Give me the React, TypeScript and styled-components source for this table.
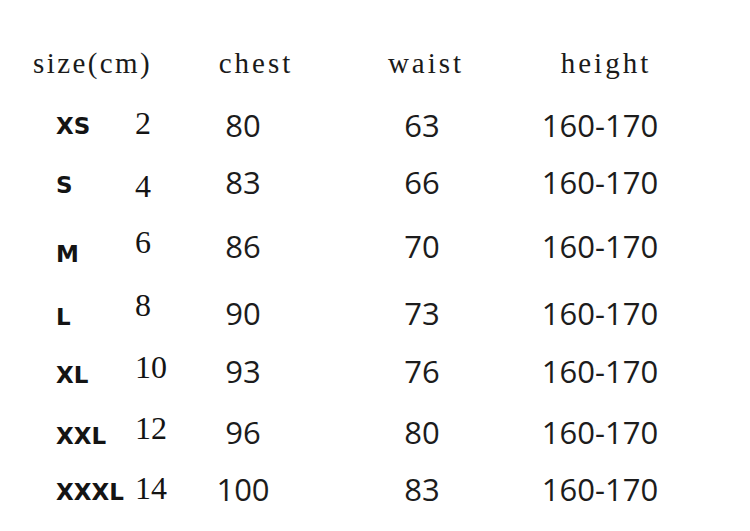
import React from "react";
import styled, { createGlobalStyle } from "styled-components";

const GlobalStyle = createGlobalStyle`
    html, body {
        margin: 0;
        padding: 0;
        background: #ffffff;
    }
`;

const Chart = styled.div`
    width: 750px;
    height: 531px;
    padding-top: 49px;
    box-sizing: border-box;
    background: #ffffff;
    color: #141414;
    overflow: hidden;
`;

const HeaderRow = styled.div`
    display: grid;
    grid-template-columns: 117px 212px 128px 232px;
    padding-left: 33px;
    height: 24px;
    align-items: end;
    font-family: "Liberation Serif", "Times New Roman", serif;
    font-size: 29px;
    letter-spacing: 3px;
    line-height: 1;
    color: #1a1a1a;
`;

const HeaderCell = styled.div<{ $center?: boolean; $tight?: boolean }>`
    display: flex;
    justify-content: ${({ $center }) => ($center ? "center" : "flex-start")};
    letter-spacing: ${({ $tight }) => ($tight ? "2.4px" : "3px")};
    white-space: nowrap;
`;

const Row = styled.div<{ $height: number }>`
    display: grid;
    grid-template-columns: 79px 55px 106px 252px 104px;
    padding-left: 56px;
    height: ${({ $height }) => $height}px;
    align-items: end;
`;

const SizeLabel = styled.div<{ $lift: number }>`
    font-family: "DejaVu Sans", "Open Sans", sans-serif;
    font-weight: bold;
    font-size: 23px;
    line-height: 1;
    margin-bottom: ${({ $lift }) => $lift}px;
    white-space: nowrap;
`;

const SizeNumber = styled.div<{ $lift: number }>`
    font-family: "Liberation Serif", "Times New Roman", serif;
    font-size: 32px;
    line-height: 1;
    margin-bottom: ${({ $lift }) => $lift - 1.7}px;
    white-space: nowrap;
`;

const Value = styled.div`
    display: flex;
    justify-content: center;
    font-family: "Open Sans", "Noto Sans", sans-serif;
    font-size: 31px;
    line-height: 1;
    color: #1c1c1c;
    white-space: nowrap;
`;

type SizeRow = {
    label: string;
    num: number;
    chest: number;
    waist: number;
    height: string;
    rowHeight: number;
    labelLift: number;
    numLift: number;
};

const rows: SizeRow[] = [
    { label: "XS", num: 2, chest: 80, waist: 63, height: "160-170", rowHeight: 68, labelLift: 3, numLift: 4 },
    { label: "S", num: 4, chest: 83, waist: 66, height: "160-170", rowHeight: 57, labelLift: 1, numLift: -2 },
    { label: "M", num: 6, chest: 86, waist: 70, height: "160-170", rowHeight: 64, labelLift: -4, numLift: 6 },
    { label: "L", num: 8, chest: 90, waist: 73, height: "160-170", rowHeight: 67, labelLift: 0, numLift: 10 },
    { label: "XL", num: 10, chest: 93, waist: 76, height: "160-170", rowHeight: 58, labelLift: 0, numLift: 6 },
    { label: "XXL", num: 12, chest: 96, waist: 80, height: "160-170", rowHeight: 61, labelLift: 0, numLift: 6 },
    { label: "XXXL", num: 14, chest: 100, waist: 83, height: "160-170", rowHeight: 57, labelLift: 1, numLift: 3 },
];

export default function App() {
    return (
        <>
            <GlobalStyle />
            <Chart>
                <HeaderRow>
                    <HeaderCell $tight>size(cm)</HeaderCell>
                    <HeaderCell $center>chest</HeaderCell>
                    <HeaderCell $center>waist</HeaderCell>
                    <HeaderCell $center>height</HeaderCell>
                </HeaderRow>
                {rows.map((row) => (
                    <Row key={row.label} $height={row.rowHeight}>
                        <SizeLabel $lift={row.labelLift}>{row.label}</SizeLabel>
                        <SizeNumber $lift={row.numLift}>{row.num}</SizeNumber>
                        <Value>{row.chest}</Value>
                        <Value>{row.waist}</Value>
                        <Value>{row.height}</Value>
                    </Row>
                ))}
            </Chart>
        </>
    );
}
